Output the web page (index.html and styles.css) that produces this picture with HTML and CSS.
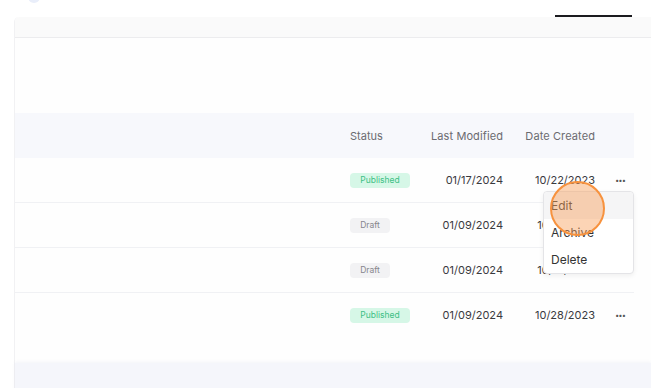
FILE: index.html
```html
<!DOCTYPE html>
<html lang="en">
<head>
    <meta charset="UTF-8">
    <meta name="viewport" content="width=device-width, initial-scale=1.0">
    <link rel="stylesheet" href="styles.css">
</head>
<body>
    <div class="topbar">
        <div class="avatar"></div>
        <div class="tab-line"></div>
    </div>
    <div class="card">
        <div class="card-head"></div>
        <div class="card-space"></div>
        <div class="table">
            <div class="row head">
                <div></div>
                <div class="status">Status</div>
                <div class="num">Last Modified</div>
                <div class="num">Date Created</div>
                <div></div>
            </div>
            <div class="row">
                <div></div>
                <div class="status"><span class="badge published">Published</span></div>
                <div class="num">01/17/2024</div>
                <div class="num">10/22/2023</div>
                <div class="actions">
                    <span class="dots">&middot;&middot;&middot;</span>
                    <div class="menu">
                        <div class="menu-item active">Edit</div>
                        <div class="menu-item">Archive</div>
                        <div class="menu-item">Delete</div>
                        <div class="click-mark"></div>
                    </div>
                </div>
            </div>
            <div class="row">
                <div></div>
                <div class="status"><span class="badge draft">Draft</span></div>
                <div class="num">01/09/2024</div>
                <div class="num">10/15/2023</div>
                <div class="actions"><span class="dots">&middot;&middot;&middot;</span></div>
            </div>
            <div class="row">
                <div></div>
                <div class="status"><span class="badge draft">Draft</span></div>
                <div class="num">01/09/2024</div>
                <div class="num">10/15/2023</div>
                <div class="actions"><span class="dots">&middot;&middot;&middot;</span></div>
            </div>
            <div class="row last">
                <div></div>
                <div class="status"><span class="badge published">Published</span></div>
                <div class="num">01/09/2024</div>
                <div class="num">10/28/2023</div>
                <div class="actions"><span class="dots">&middot;&middot;&middot;</span></div>
            </div>
        </div>
        <div class="card-foot"></div>
    </div>
</body>
</html>
```

FILE: styles.css
```css
body {
    margin: 0;
    background: #ffffff;
    font-family: "Inter", "Liberation Sans", sans-serif;
    color: #333;
    overflow: hidden;
}
.topbar {
    height: 17px;
    display: flex;
    align-items: flex-end;
    justify-content: space-between;
    padding: 0 19px 0 28px;
}
.avatar {
    width: 12px;
    height: 12px;
    border-radius: 50%;
    background: #e9eefa;
    align-self: flex-start;
    margin-top: -9px;
}
.tab-line {
    width: 77px;
    height: 2px;
    background: #1b1b1f;
}
.card {
    margin-left: 14px;
    border-left: 1px solid #f1f1f3;
    border-radius: 5px 0 0 0;
    background: #fefefe;
}
.card-head {
    height: 20px;
    background: #fafafa;
    border-bottom: 1px solid #ececee;
    border-radius: 5px 0 0 0;
}
.card-space {
    height: 75px;
}
.table {
    margin-right: 17px;
    padding-bottom: 26px;
}
.row {
    display: grid;
    grid-template-columns: 1fr 70px 83px 92px 39px;
    align-items: center;
    height: 44px;
    border-bottom: 1px solid #f0f1f4;
    font-size: 11px;
    color: #3a3a3e;
}
.row.head {
    height: 45px;
    border-bottom: 0;
    background: #f7f8fc;
    font-size: 11px;
    color: #6b6b70;
}
.row.last {
    border-bottom: 0;
}
.num {
    text-align: right;
}
.head .num {
    letter-spacing: 0.1px;
}
.badge {
    display: inline-block;
    height: 15px;
    line-height: 15px;
    font-size: 8.5px;
    border-radius: 4px;
    text-align: center;
}
.published {
    width: 60px;
    background: #d6f7e7;
    color: #3dbf85;
}
.draft {
    width: 40px;
    background: #f2f2f4;
    color: #86868c;
}
.actions {
    position: relative;
    display: flex;
    justify-content: center;
    padding-left: 11px;
}
.dots {
    font-size: 13px;
    font-weight: 700;
    color: #555;
    letter-spacing: -1px;
    line-height: 10px;
}
.menu {
    position: absolute;
    right: 0;
    top: 16px;
    width: 89px;
    background: #fff;
    border: 1px solid #e4e4e7;
    border-radius: 4px;
    box-shadow: 0 2px 5px rgba(0,0,0,0.06);
    z-index: 2;
}
.menu-item {
    height: 27px;
    line-height: 27px;
    padding-left: 7px;
    font-size: 12px;
    color: #333;
}
.menu-item.active {
    background: #f5f5f6;
    border-radius: 4px 4px 0 0;
}
.click-mark {
    position: absolute;
    left: 6px;
    top: -11px;
    width: 51px;
    height: 51px;
    border-radius: 50%;
    border: 2px solid #f7923e;
    background: rgba(248, 160, 90, 0.45);
}
.card-foot {
    height: 40px;
    background: #f5f6fb;
    box-shadow: 0 -1px 3px rgba(120,130,180,0.08);
}
```
